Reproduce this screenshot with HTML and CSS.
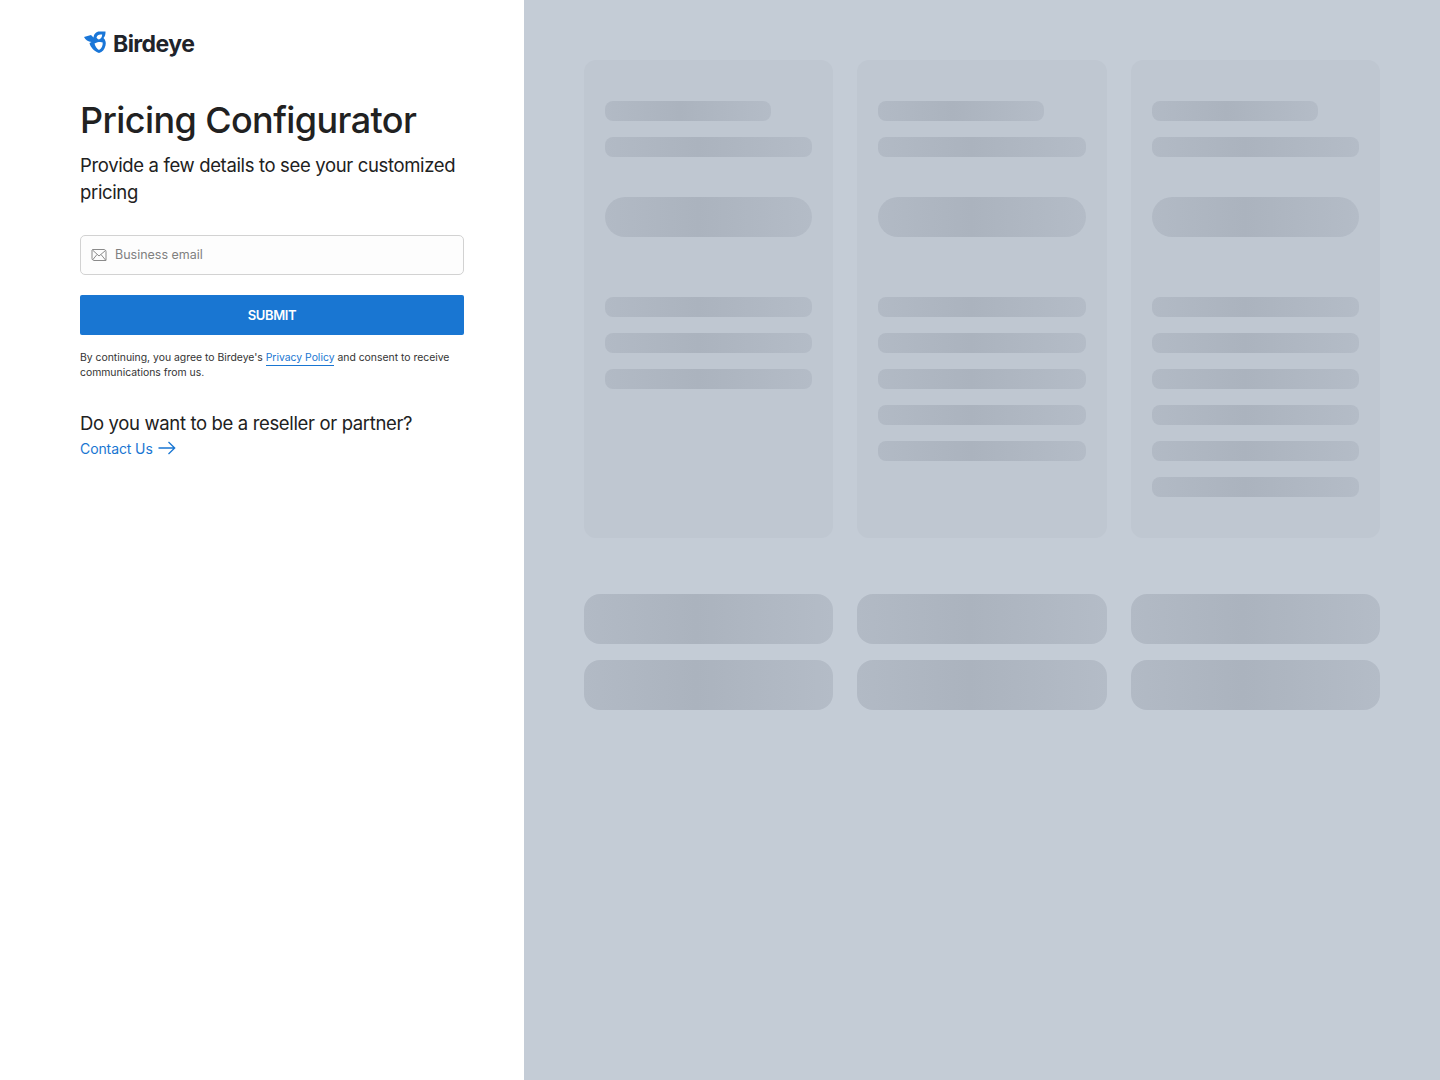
FILE: index.html
```html
<!DOCTYPE html>
<html lang="en">
<head>
<meta charset="utf-8">
<title>Pricing Configurator - Birdeye</title>
<link rel="stylesheet" href="styles.css">
</head>
<body>
<div class="page">
  <main class="left">
    <div class="logo">
      <svg class="logo-icon" width="24" height="26" viewBox="0 0 24 26" aria-hidden="true">
        <path fill="#1976d8" d="M0 7 7 5 9.500 7.500C10 4 12 1.500 15.500 1.500H21.500C21.700 4 21 6.500 19.500 8 21.500 10 22.300 12.500 21.500 15.500 20.500 19.500 18.500 22 15 23 10 21 6.500 17.500 5.500 13L7.500 12C4 11.500 1.500 10 0 7Z"/>
        <path fill="#fff" d="M12.500 7.500C13 5.500 14.500 4.500 16.500 4.500H18.200C18.200 7 16.800 8.800 15 9.500 14 9.200 13 8.500 12.500 7.500ZM10.500 13.500 13.500 12.200C15.500 11.800 17.500 11.700 18.700 12.500 19 15.500 17.500 18.800 15 20 13 19 11.300 16.500 10.500 13.500Z"/>
      </svg>
      <span class="logo-text">Birdeye</span>
    </div>
    <h1 class="title">Pricing Configurator</h1>
    <p class="subtitle">Provide a few details to see your customized pricing</p>
    <form class="form">
      <label class="field">
        <svg class="mail" width="16" height="14" viewBox="0 0 16 14" aria-hidden="true">
          <path fill="none" stroke="#8a8a8a" d="M1.500 1.500H13C14 1.500 15 2.500 15 3.500V12.500H3C2 12.500 1 11.500 1 10.500V2ZM1.500 2 8 8 14.500 2.500M1.500 12 6 6.500M14.500 12 10 6.500"/>
        </svg>
        <input class="input" type="text" placeholder="Business email">
      </label>
      <button class="submit" type="button">SUBMIT</button>
    </form>
    <p class="terms">By continuing, you agree to Birdeye's <a class="policy" href="#">Privacy Policy</a> and consent to receive communications from us.</p>
    <p class="question">Do you want to be a reseller or partner?</p>
    <a class="contact" href="#">Contact Us
      <svg width="18" height="14" viewBox="0 0 18 14" aria-hidden="true"><path fill="none" stroke="#1976d2" stroke-width="1.300" d="M0.500 7H16.500M10.500 1 16.700 7 10.500 13"/></svg>
    </a>
  </main>
  <aside class="right">
    <div class="cards">
      <div class="card">
        <div class="bar short"></div><div class="bar"></div><div class="bar pill"></div>
        <div class="list"><div class="bar"></div><div class="bar"></div><div class="bar"></div></div>
      </div>
      <div class="card">
        <div class="bar short"></div><div class="bar"></div><div class="bar pill"></div>
        <div class="list"><div class="bar"></div><div class="bar"></div><div class="bar"></div><div class="bar"></div><div class="bar"></div></div>
      </div>
      <div class="card">
        <div class="bar short"></div><div class="bar"></div><div class="bar pill"></div>
        <div class="list"><div class="bar"></div><div class="bar"></div><div class="bar"></div><div class="bar"></div><div class="bar"></div><div class="bar"></div></div>
      </div>
    </div>
    <div class="blocks">
      <div class="block"></div><div class="block"></div><div class="block"></div>
      <div class="block"></div><div class="block"></div><div class="block"></div>
    </div>
  </aside>
</div>
</body>
</html>
```

FILE: styles.css
```css
* { box-sizing: border-box; }
html, body { margin: 0; height: 100%; }
body { font-family: "Inter", "Lato", sans-serif; background: #fff; color: #212121; }
.page { display: flex; min-height: 1080px; }

.left { width: 524px; flex: none; padding: 28px 60px 0 80px; }
.logo { display: flex; align-items: center; height: 32px; padding-left: 4px; gap: 5px; }
.logo-icon { flex: none; margin-top: -3px; }
.logo-text { font-size: 23px; font-weight: 700; letter-spacing: -0.55px; color: #20232a; }

.title { margin: 36px 0 0; font-size: 36px; line-height: 48px; font-weight: 500; letter-spacing: -0.6px; color: #212121; }
.subtitle { margin: 8px 0 0; font-size: 18.500px; line-height: 27px; font-weight: 400; letter-spacing: -0.35px; color: #212121; }

.form { margin-top: 29px; display: flex; flex-direction: column; gap: 20px; }
.field { display: flex; align-items: center; gap: 8px; height: 40px; padding: 0 10px; border: 1px solid #d2d2d2; border-radius: 5px; background: #fdfdfd; }
.mail { flex: none; }
.input { flex: 1; border: 0; outline: 0; padding: 0 0 1px; background: none; font: 400 12.500px "Inter", sans-serif; color: #555; }
.input::placeholder { color: #808080; opacity: 1; }
.submit { height: 40px; border: 0; border-radius: 2px; background: #1976d2; color: #fff; font: 600 13px "Inter", sans-serif; letter-spacing: -0.4px; }

.terms { margin: 15px 0 0; font-size: 10.400px; line-height: 15px; color: #333; }
.policy { color: #1976d2; text-decoration: none; border-bottom: 1px solid #1976d2; padding-bottom: 1px; }

.question { margin: 30px 0 0; font-size: 18.500px; line-height: 26px; letter-spacing: -0.35px; color: #212121; }
.contact { display: inline-flex; align-items: center; gap: 5px; margin-top: 1px; height: 22px; font-size: 14px; letter-spacing: -0.1px; color: #1976d2; text-decoration: none; }

.right { flex: 1; padding: 60px; background: #c4ccd6; }
.cards, .blocks { display: grid; grid-template-columns: repeat(3, 1fr); gap: 24px; }
.card { height: 478px; padding: 41px 21px 0; border-radius: 12px; background: #bfc7d1; display: flex; flex-direction: column; gap: 16px; }
.bar, .block { background: linear-gradient(90deg, #b2bac5 0%, #abb3be 45%, #b4bcc7 100%); }
.bar { height: 20px; border-radius: 8px; }
.short { width: 80%; }
.pill { height: 40px; border-radius: 20px; margin-top: 24px; }
.list { display: flex; flex-direction: column; gap: 16px; margin-top: 44px; }
.blocks { margin-top: 56px; gap: 16px 24px; }
.block { height: 50px; border-radius: 16px; }
```
